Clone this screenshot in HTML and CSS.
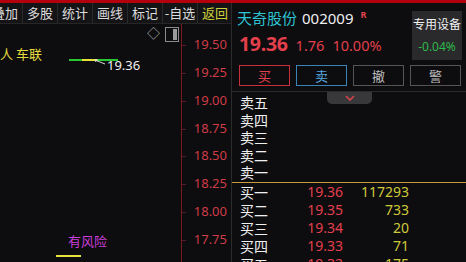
FILE: index.html
```html
<!DOCTYPE html>
<html lang="zh">
<head>
    <meta charset="UTF-8">
    <title>天奇股份 002009</title>
    <link rel="stylesheet" href="styles.css">
</head>
<body>
    <div class="topbar"></div>
    <div class="main">
        <!-- Chart side -->
        <div class="left">
            <div class="tabs">
                <span class="tab first">叠加</span>
                <span class="tab">多股</span>
                <span class="tab">统计</span>
                <span class="tab">画线</span>
                <span class="tab">标记</span>
                <span class="tab">-自选</span>
                <span class="tab back">返回</span>
            </div>
            <div class="chart">
                <div class="plot">
                    <span class="concept">人 车联</span>
                    <span class="last-line"><span class="last-mark"></span></span>
                    <svg class="pointer" width="12" height="6" viewBox="0 0 12 6">
                        <path d="M1 1 L11 5" stroke="#ddd" stroke-width="1" fill="none"/>
                        <path d="M1 1 L4 1 M1 1 L2 3" stroke="#ddd" stroke-width="1" fill="none"/>
                    </svg>
                    <span class="last-price">19.36</span>
                    <span class="diamond">&#9671;</span>
                    <svg class="panel-icon" width="14" height="15" viewBox="0 0 14 15">
                        <rect x="0.5" y="0.5" width="13" height="14" fill="none" stroke="#8a8a8a"/>
                        <rect x="8" y="2" width="4" height="11" fill="#9a9a9a"/>
                    </svg>
                    <span class="risk">有风险</span>
                    <span class="risk-line"></span>
                </div>
                <div class="axis">
                    <div class="tick">19.50</div>
                    <div class="tick">19.25</div>
                    <div class="tick">19.00</div>
                    <div class="tick">18.75</div>
                    <div class="tick">18.50</div>
                    <div class="tick">18.25</div>
                    <div class="tick">18.00</div>
                    <div class="tick">17.75</div>
                </div>
            </div>
        </div>

        <!-- Quote side -->
        <div class="right">
            <div class="head">
                <div class="info">
                    <div class="title">
                        <span class="name">天奇股份</span>
                        <span class="code">002009</span>
                        <span class="flag">R</span>
                    </div>
                    <div class="quote">
                        <span class="price">19.36</span>
                        <span>1.76</span>
                        <span>10.00%</span>
                    </div>
                </div>
                <div class="sector">
                    <span class="sector-name">专用设备</span>
                    <span class="sector-chg">-0.04%</span>
                </div>
            </div>
            <div class="actions">
                <button class="act buy">买</button>
                <button class="act sell">卖</button>
                <button class="act">撤</button>
                <button class="act">警</button>
            </div>
            <div class="book">
                <span class="fold">
                    <svg width="10" height="6" viewBox="0 0 10 6">
                        <path d="M1 1 L5 5 L9 1" stroke="#d9434f" stroke-width="1.6" fill="none"/>
                    </svg>
                </span>
                <div class="asks">
                    <div class="row"><span>卖五</span></div>
                    <div class="row"><span>卖四</span></div>
                    <div class="row"><span>卖三</span></div>
                    <div class="row"><span>卖二</span></div>
                    <div class="row"><span>卖一</span></div>
                </div>
                <div class="bids">
                    <div class="row"><span>买一</span><span class="p">19.36</span><span class="v">117293</span></div>
                    <div class="row"><span>买二</span><span class="p">19.35</span><span class="v">733</span></div>
                    <div class="row"><span>买三</span><span class="p">19.34</span><span class="v">20</span></div>
                    <div class="row"><span>买四</span><span class="p">19.33</span><span class="v">71</span></div>
                    <div class="row"><span>买五</span><span class="p">19.32</span><span class="v">175</span></div>
                </div>
            </div>
        </div>
    </div>
</body>
</html>
```

FILE: styles.css
```css
body {
    margin: 0;
    width: 466px;
    height: 262px;
    overflow: hidden;
    background-color: #0d0c0f;
    color: #e6e6e6;
    font-family: "Noto Sans", "Noto Sans CJK SC", sans-serif;
}

.topbar {
    height: 3px;
    background-color: #b3000c;
}

.main {
    display: flex;
    height: 259px;
}

/* Chart side */
.left {
    width: 231px;
    border-right: 1px solid #2c2c2c;
    display: flex;
    flex-direction: column;
    overflow: hidden;
}

.tabs {
    display: flex;
    height: 20px;
    background-color: #141316;
    border-bottom: 1px solid #262626;
}

.tab {
    flex: none;
    width: 34px;
    border-right: 1px solid #2a2a2a;
    font-family: "Noto Sans CJK SC", sans-serif;
    font-size: 13px;
    line-height: 20px;
    text-align: center;
    color: #dcdcdc;
    white-space: nowrap;
}

.tab.first {
    margin-left: -12px;
}

.tab.back {
    color: #cfcf3a;
}

.chart {
    flex: 1;
    display: flex;
}

.plot {
    position: relative;
    width: 181px;
    border-right: 1px solid #7a1820;
}

.concept {
    position: absolute;
    left: 0;
    top: 21px;
    font-family: "Noto Sans CJK SC", sans-serif;
    font-size: 13px;
    line-height: 18px;
    color: #e3dc3c;
}

.last-line {
    position: absolute;
    left: 69px;
    top: 35px;
    width: 49px;
    height: 2px;
    background-color: #28c832;
}

.last-mark {
    position: absolute;
    left: 13px;
    top: 0;
    width: 15px;
    height: 2px;
    background-color: #e8e23c;
}

.pointer {
    position: absolute;
    left: 94px;
    top: 35px;
}

.last-price {
    position: absolute;
    left: 107px;
    top: 32px;
    font-size: 13px;
    line-height: 18px;
    color: #f0f0f0;
}

.diamond {
    position: absolute;
    left: 147px;
    top: 1px;
    font-size: 13px;
    line-height: 16px;
    color: #a8a8a8;
}

.panel-icon {
    position: absolute;
    left: 165px;
    top: 3px;
}

.risk {
    position: absolute;
    left: 68px;
    top: 208px;
    font-family: "Noto Sans CJK SC", sans-serif;
    font-size: 13px;
    line-height: 18px;
    color: #c93fd9;
}

.risk-line {
    position: absolute;
    left: 56px;
    top: 231px;
    width: 25px;
    height: 2px;
    background-color: #e8e23c;
}

.axis {
    flex: 1;
    padding-top: 7px;
}

.tick {
    position: relative;
    height: 27.85px;
    line-height: 27.85px;
    padding-right: 4px;
    font-size: 13px;
    text-align: right;
    color: #cf3d48;
}

.tick::before {
    content: "";
    position: absolute;
    left: 0;
    top: 14px;
    width: 4px;
    height: 1px;
    background-color: #5a1a1f;
}

/* Quote side */
.right {
    position: relative;
    flex: 1;
    display: flex;
    flex-direction: column;
}

.head {
    display: flex;
    padding: 5px 4px 0 5px;
}

.info {
    flex: 1;
}

.title {
    display: flex;
    align-items: flex-start;
    height: 20px;
    font-size: 15px;
    line-height: 20px;
}

.name {
    font-family: "Noto Sans CJK SC", sans-serif;
    color: #2ec3cf;
}

.code {
    margin-left: 5px;
    color: #f0f0f0;
}

.flag {
    margin-left: 7px;
    font-size: 9px;
    font-weight: bold;
    line-height: 14px;
    color: #e0414d;
}

.quote {
    display: flex;
    align-items: baseline;
    gap: 8px;
    margin-top: 5px;
    padding-left: 2px;
    font-size: 14.5px;
    line-height: 22px;
    color: #e3404c;
}

.price {
    font-size: 19.5px;
    font-weight: bold;
    letter-spacing: -0.3px;
}

.sector {
    width: 50px;
    height: 49px;
    margin-top: 3px;
    background-color: #2a2a2c;
    display: flex;
    flex-direction: column;
    align-items: center;
    font-size: 12px;
}

.sector-name {
    margin-top: 4px;
    line-height: 18px;
    font-family: "Noto Sans CJK SC", sans-serif;
    color: #f2f2f2;
}

.sector-chg {
    margin-top: 6px;
    line-height: 16px;
    color: #2fb84a;
}

.actions {
    display: flex;
    gap: 6px;
    margin-top: 5px;
    padding-left: 7px;
    padding-bottom: 5px;
    border-bottom: 1px solid #2a2a2a;
}

.act {
    width: 51px;
    height: 21px;
    padding: 0;
    background-color: transparent;
    border: 1px solid #555;
    font-family: "Noto Sans CJK SC", sans-serif;
    font-size: 13px;
    color: #bdbdbd;
}

.act.buy {
    border-color: #c8303c;
    color: #e0414d;
}

.act.sell {
    border-color: #3a84b8;
    color: #55a6de;
}

.book {
    position: relative;
    padding-top: 2px;
}

.fold {
    position: absolute;
    left: 95px;
    top: 0;
    width: 45px;
    height: 12px;
    background-color: #38383a;
    border-radius: 0 0 5px 5px;
    display: flex;
    justify-content: center;
    align-items: center;
}

.row {
    display: grid;
    grid-template-columns: 60px 43px 66px;
    height: 17.6px;
    line-height: 17.6px;
    padding-left: 8px;
    font-size: 14px;
}

.row span:first-child {
    font-family: "Noto Sans CJK SC", sans-serif;
    color: #f0f0f0;
}

.bids {
    border-top: 1px solid #c89b3c;
}

.bids .row {
    height: 18px;
    line-height: 18px;
}

.p {
    text-align: right;
    color: #e3404c;
}

.v {
    text-align: right;
    color: #cdc93a;
}
```
